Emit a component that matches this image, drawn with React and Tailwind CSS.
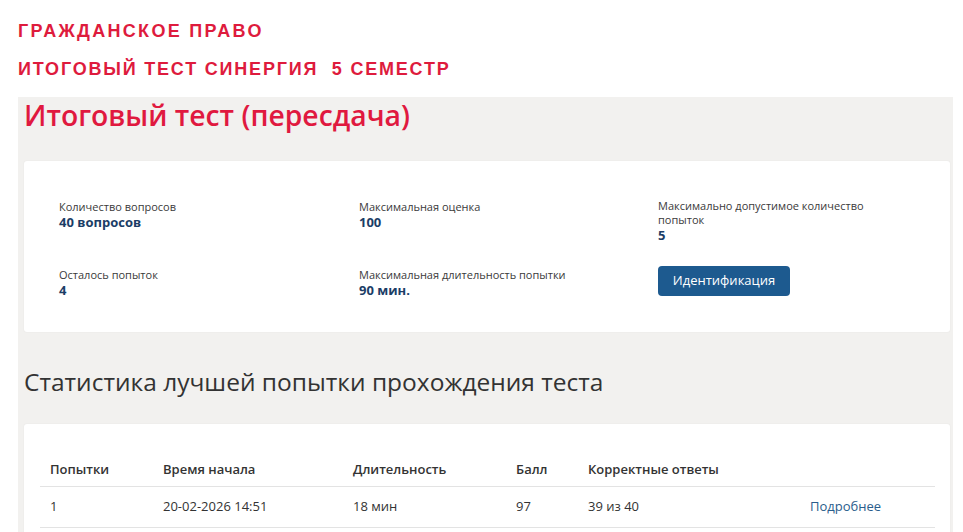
export default function App() {
  const font = { fontFamily: '"Open Sans", "Noto Sans", sans-serif' };
  return (
    <div className="w-[963px] h-[532px] overflow-hidden bg-white">
      <div className="pl-[18px] pt-[19px] font-bold text-[#de1b3d] text-[18px] leading-[24px]" style={{ fontFamily: '"Liberation Sans", Arial, sans-serif' }}>
        <div className="tracking-[2.3px]">ГРАЖДАНСКОЕ ПРАВО</div>
        <div className="mt-[14px] tracking-[1.8px]">ИТОГОВЫЙ ТЕСТ СИНЕРГИЯ&nbsp; 5 СЕМЕСТР</div>
      </div>
      <div className="ml-[18px] mt-[16px] w-[935px] h-[440px] bg-[#f2f1ef] pl-[6px] pr-[3px]" style={font}>
        <h1 className="text-[#e0193f] text-[28.3px] font-semibold leading-[36px]">Итоговый тест (пересдача)</h1>
        <div className="mt-[28px] bg-white rounded-[3px] shadow-[0_0_2px_rgba(0,0,0,0.06)] h-[171px] pl-[35px] pt-[38px] grid grid-cols-[300px_299px_260px] grid-rows-[45px_auto] gap-y-[23px] text-[#3a3a3a]">
          <div>
            <div className="text-[11px] leading-[15px]">Количество вопросов</div>
            <div className="text-[13px] font-bold text-[#1b3d66] leading-[17px]">40 вопросов</div>
          </div>
          <div>
            <div className="text-[11px] leading-[15px]">Максимальная оценка</div>
            <div className="text-[13px] font-bold text-[#1b3d66] leading-[17px]">100</div>
          </div>
          <div>
            <div className="text-[11px] leading-[14px]">Максимально допустимое количество<br />попыток</div>
            <div className="text-[13px] font-bold text-[#1b3d66] leading-[17px]">5</div>
          </div>
          <div>
            <div className="text-[11px] leading-[15px]">Осталось попыток</div>
            <div className="text-[13px] font-bold text-[#1b3d66] leading-[17px]">4</div>
          </div>
          <div>
            <div className="text-[11px] leading-[15px]">Максимальная длительность попытки</div>
            <div className="text-[13px] font-bold text-[#1b3d66] leading-[17px]">90 мин.</div>
          </div>
          <div className="mt-[-1px]">
            <button className="w-[132px] h-[30px] rounded-[4px] bg-[#1d5a8f] text-white text-[13px] font-medium">Идентификация</button>
          </div>
        </div>
        <h2 className="mt-[34px] text-[24.5px] leading-[32px] text-[#333] font-normal">Статистика лучшей попытки прохождения теста</h2>
        <div className="mt-[26px] bg-white rounded-[3px] shadow-[0_0_2px_rgba(0,0,0,0.06)] h-[200px] pl-[16px] pr-[15px] pt-[32px]">
          <table className="w-full text-[13px] text-[#333] border-collapse">
            <thead>
              <tr className="border-b border-[#e3e3e3]">
                <th className="text-left font-semibold w-[123px] pl-[10px] h-[30px] pb-[3px]">Попытки</th>
                <th className="text-left font-semibold w-[190px] pb-[3px]">Время начала</th>
                <th className="text-left font-semibold w-[163px] pb-[3px]">Длительность</th>
                <th className="text-left font-semibold w-[72px] pb-[3px]">Балл</th>
                <th className="text-left font-semibold w-[222px] pb-[3px]">Корректные ответы</th>
                <th></th>
              </tr>
            </thead>
            <tbody>
              <tr className="border-b border-[#e3e3e3]">
                <td className="pl-[10px] h-[41px]">1</td>
                <td>20-02-2026 14:51</td>
                <td>18 мин</td>
                <td>97</td>
                <td>39 из 40</td>
                <td className="text-[#2a5d8c]">Подробнее</td>
              </tr>
            </tbody>
          </table>
        </div>
      </div>
    </div>
  );
}
